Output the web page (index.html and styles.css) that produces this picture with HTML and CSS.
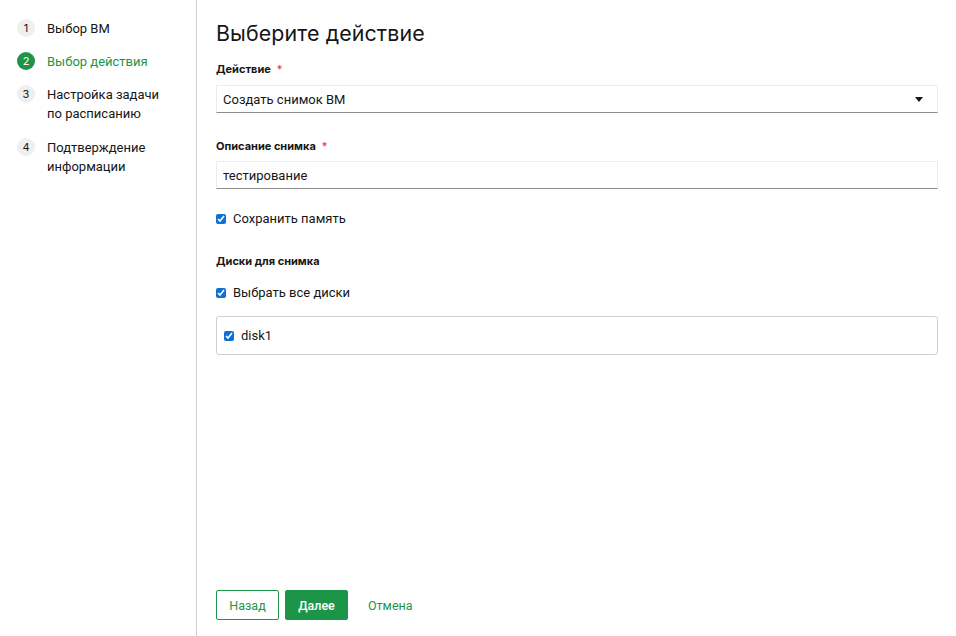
FILE: index.html
```html
<!DOCTYPE html>
<html lang="ru">
<head>
<meta charset="utf-8">
<link rel="stylesheet" href="styles.css">
</head>
<body>
<div class="app">
  <aside class="sidebar">
    <ol class="steps">
      <li class="step"><span class="num">1</span><span class="label">Выбор ВМ</span></li>
      <li class="step active"><span class="num">2</span><span class="label">Выбор действия</span></li>
      <li class="step"><span class="num">3</span><span class="label">Настройка задачи<br>по расписанию</span></li>
      <li class="step"><span class="num">4</span><span class="label">Подтверждение<br>информации</span></li>
    </ol>
  </aside>
  <main class="main">
    <div class="form">
      <h1 class="title">Выберите действие</h1>
      <div class="field">
        <div class="flabel">Действие <span class="req">*</span></div>
        <div class="select"><span>Создать снимок ВМ</span><span class="caret"></span></div>
      </div>
      <div class="field">
        <div class="flabel">Описание снимка <span class="req">*</span></div>
        <div class="input">тестирование</div>
      </div>
      <label class="check mem"><input type="checkbox" checked><span>Сохранить память</span></label>
      <div class="flabel disks">Диски для снимка</div>
      <label class="check all"><input type="checkbox" checked><span>Выбрать все диски</span></label>
      <div class="diskbox">
        <label class="check"><input type="checkbox" checked><span>disk1</span></label>
      </div>
    </div>
    <div class="actions">
      <button class="btn outline">Назад</button>
      <button class="btn primary">Далее</button>
      <button class="btn link">Отмена</button>
    </div>
  </main>
</div>
</body>
</html>
```
FILE: styles.css
```css
* { box-sizing: border-box; }
html, body { margin: 0; padding: 0; height: 100%; }
body {
  font-family: "Roboto", "Liberation Sans", sans-serif;
  font-size: 13px;
  color: #161616;
  background: #fff;
}
.app { display: flex; height: 636px; }
.sidebar {
  width: 197px;
  border-right: 1px solid #d0d0d0;
  padding-top: 19px;
  flex-shrink: 0;
}
.steps { list-style: none; margin: 0; padding: 0 0 0 17px; }
.step { display: flex; align-items: flex-start; gap: 12px; line-height: 19px; margin-bottom: 14px; }
.step:nth-child(3) { margin-bottom: 15px; }
.num {
  width: 18px; height: 18px; border-radius: 50%;
  background: #efefef; color: #161616;
  font-family: "Inter", sans-serif;
  font-size: 11px; display: flex; align-items: center; justify-content: center;
  flex-shrink: 0;
}
.step.active .num { background: #1d9549; color: #fff; }
.step.active .label { color: #1d9549; }
.main { flex: 1; padding: 18px 18px 16px 19px; display: flex; flex-direction: column; }
.form { flex: 1; }
.title { font-family: "Inter", sans-serif; font-size: 21.4px; font-weight: 400; margin: 0 0 14px; line-height: 30px; letter-spacing: 0.1px; }
.flabel { font-family: "Inter", sans-serif; font-size: 11px; font-weight: 700; line-height: 14px; margin-bottom: 9px; }
.field + .field .flabel { margin-bottom: 8px; }
.req { color: #e0515c; margin-left: 3px; }
.field { margin-bottom: 26px; }
.select, .input {
  height: 28px;
  border: 1px solid #ececec;
  border-bottom: 1px solid #8d8d8d;
  display: flex; align-items: center; justify-content: space-between;
  padding: 0 14px 0 6px;
  font-size: 13px;
}
.caret {
  width: 0; height: 0;
  border-left: 4px solid transparent; border-right: 4px solid transparent;
  border-top: 5px solid #161616;
}
.check { display: flex; align-items: center; gap: 7px; font-size: 13px; line-height: 18px; }
.check input { width: 10px; height: 10px; margin: 0; accent-color: #0f6fd6; }
.mem { margin-top: -5px; margin-bottom: 26px; }
.disks { margin-bottom: 16px; }
.all { margin-bottom: 14px; }
.diskbox {
  height: 39px; border: 1px solid #d0d0d0; border-radius: 3px;
  display: flex; align-items: center; padding-left: 7px;
}
.actions { display: flex; gap: 6px; align-items: center; }
.btn {
  font-family: inherit; font-size: 12.5px; height: 30px; padding: 0 12px;
  border-radius: 2px; cursor: pointer; min-width: 63px;
}
.btn.outline { background: #fff; border: 1px solid #1d9549; color: #1d9549; }
.btn.primary { background: #1d9549; border: 1px solid #1d9549; color: #fff; font-weight: 500; }
.btn.link { background: none; border: none; color: #1d9549; padding: 0 14px; min-width: 0; }
```
